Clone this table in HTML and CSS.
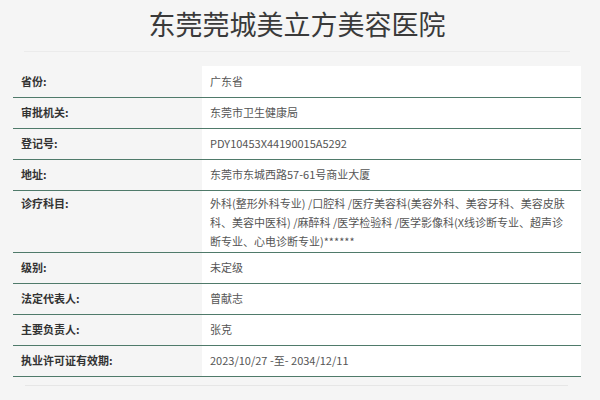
FILE: index.html
```html
<!DOCTYPE html>
<html lang="zh-CN">
<head>
  <meta charset="UTF-8">
  <title>东莞莞城美立方美容医院</title>
  <link rel="stylesheet" href="styles.css">
</head>
<body>
  <h1 class="titulo">东莞莞城美立方美容医院</h1>

  <div class="ficha">
    <table class="info">
      <tr><th>省份:</th><td>广东省</td></tr>
      <tr><th>审批机关:</th><td>东莞市卫生健康局</td></tr>
      <tr><th>登记号:</th><td>PDY10453X44190015A5292</td></tr>
      <tr><th>地址:</th><td>东莞市东城西路57-61号商业大厦</td></tr>
      <tr class="largo"><th>诊疗科目:</th><td>外科(整形外科专业) /口腔科 /医疗美容科(美容外科、美容牙科、美容皮肤科、美容中医科) /麻醉科 /医学检验科 /医学影像科(X线诊断专业、超声诊断专业、心电诊断专业)******</td></tr>
      <tr><th>级别:</th><td>未定级</td></tr>
      <tr><th>法定代表人:</th><td>曾献志</td></tr>
      <tr><th>主要负责人:</th><td>张克</td></tr>
      <tr><th>执业许可证有效期:</th><td>2023/10/27 -至- 2034/12/11</td></tr>
    </table>
    <div class="pie"></div>
  </div>
</body>
</html>
```

FILE: styles.css
```css
body {
  font-family: "Noto Sans CJK SC", "Open Sans", sans-serif;
  background: #f5f5f5;
  margin: 0;
  color: #333;
}
.titulo {
  margin: 0 30px 0 24px;
  height: 51px;
  line-height: 48px;
  font-size: 27px;
  font-weight: normal;
  text-align: center;
  color: #3a3a3a;
  border-bottom: 1px solid #ebebeb;
}
.ficha {
  padding: 14px 19px 0 13px;
}
.info {
  width: 100%;
  border-collapse: collapse;
  font-size: 11px;
}
.info th, .info td {
  height: 31px;
  padding: 1px 8px;
  line-height: 19px;
  border-bottom: 1px solid #4f7a6a;
  vertical-align: middle;
  text-align: left;
  box-sizing: border-box;
}
.info th {
  width: 189px;
  font-weight: bold;
  color: #333;
  background: #f5f5f5;
}
.info td {
  background: #fff;
  color: #555;
  padding-right: 8px;
}
.info .largo th,
.info .largo td {
  vertical-align: top;
  padding-top: 3px;
}
.pie {
  margin: 8px 13px 0 12px;
  border-top: 1px solid #e6e6e6;
}
```
